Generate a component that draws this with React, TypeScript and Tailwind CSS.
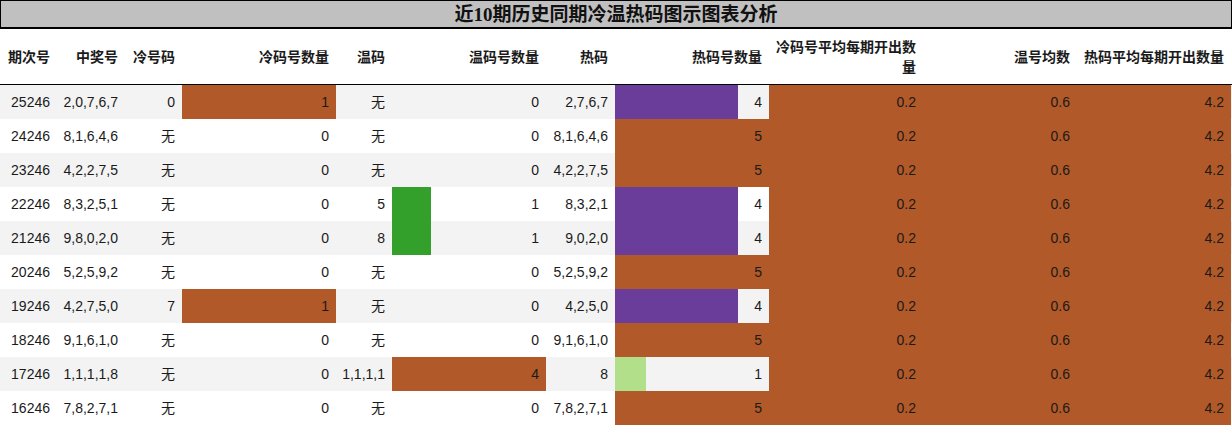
import React from "react";

const ORANGE = "#b15928";
const PURPLE = "#6a3d9a";
const GREEN = "#33a02c";
const LIGHT_GREEN = "#b2df8a";

type Bar = { pct: number; color: string } | null;
type Cell = { text: string; bar?: Bar; bg?: string };

const headers = [
  "期次号",
  "中奖号",
  "冷号码",
  "冷码号数量",
  "温码",
  "温码号数量",
  "热码",
  "热码号数量",
  "冷码号平均每期开出数量",
  "温号均数",
  "热码平均每期开出数量",
];

// [期次, 中奖, 冷号码, 冷数量, 温码, 温数量, 热码, 热数量]
const raw: [string, string, string, number, string, number, string, number][] = [
  ["25246", "2,0,7,6,7", "0", 1, "无", 0, "2,7,6,7", 4],
  ["24246", "8,1,6,4,6", "无", 0, "无", 0, "8,1,6,4,6", 5],
  ["23246", "4,2,2,7,5", "无", 0, "无", 0, "4,2,2,7,5", 5],
  ["22246", "8,3,2,5,1", "无", 0, "5", 1, "8,3,2,1", 4],
  ["21246", "9,8,0,2,0", "无", 0, "8", 1, "9,0,2,0", 4],
  ["20246", "5,2,5,9,2", "无", 0, "无", 0, "5,2,5,9,2", 5],
  ["19246", "4,2,7,5,0", "7", 1, "无", 0, "4,2,5,0", 4],
  ["18246", "9,1,6,1,0", "无", 0, "无", 0, "9,1,6,1,0", 5],
  ["17246", "1,1,1,1,8", "无", 0, "1,1,1,1", 4, "8", 1],
  ["16246", "7,8,2,7,1", "无", 0, "无", 0, "7,8,2,7,1", 5],
];

// colour of a data bar depends on the value in each column
const coldBar = (v: number): Bar => (v > 0 ? { pct: v * 100, color: ORANGE } : null);
const warmBar = (v: number): Bar => {
  if (v === 0) return null;
  return { pct: (v / 4) * 100, color: v === 1 ? GREEN : ORANGE };
};
const hotBar = (v: number): Bar => {
  if (v === 5) return { pct: 100, color: ORANGE };
  if (v === 4) return { pct: 80, color: PURPLE };
  if (v === 1) return { pct: 20, color: LIGHT_GREEN };
  return null;
};

const rows: Cell[][] = raw.map((r) => [
  { text: r[0] },
  { text: r[1] },
  { text: r[2] },
  { text: String(r[3]), bar: coldBar(r[3]) },
  { text: r[4] },
  { text: String(r[5]), bar: warmBar(r[5]) },
  { text: r[6] },
  { text: String(r[7]), bar: hotBar(r[7]) },
  { text: "0.2", bg: ORANGE },
  { text: "0.6", bg: ORANGE },
  { text: "4.2", bg: ORANGE },
]);

const cols =
  "grid grid-cols-[57px_68px_57px_154px_56px_154px_69px_154px_154px_154px_154px]";

function DataCell({ cell }: { cell: Cell }) {
  return (
    <div
      className="relative h-[34px] flex items-center justify-end pr-[7px] pt-px"
      style={cell.bg ? { backgroundColor: cell.bg } : undefined}
    >
      {cell.bar && (
        <div
          className="absolute left-0 top-0 bottom-0"
          style={{ width: `${cell.bar.pct}%`, backgroundColor: cell.bar.color }}
        />
      )}
      <span className="relative">{cell.text}</span>
    </div>
  );
}

export default function App() {
  return (
    <div
      className="w-[1232px] h-[426px] bg-white text-[#1a1a1a] text-[14px] overflow-hidden"
      style={{ fontFamily: '"Liberation Sans", "Noto Sans CJK SC", sans-serif' }}
    >
      {/* title */}
      <div className="h-[29px] bg-[#c0c0c0] border border-b-2 border-black flex items-center justify-center">
        <h1
          className="text-[19px] font-bold leading-none text-[#111]"
          style={{ fontFamily: '"Liberation Serif", "Noto Sans CJK SC", serif' }}
        >
          近10期历史同期冷温热码图示图表分析
        </h1>
      </div>

      {/* header */}
      <div className={`${cols} h-[56px] border-b border-black font-bold`}>
        {headers.map((h) => (
          <div key={h} className="flex items-center justify-end text-right pr-[7px] leading-[20px] pt-px">
            <span>{h}</span>
          </div>
        ))}
      </div>

      {/* rows */}
      {rows.map((row, i) => (
        <div key={i} className={`${cols} ${i % 2 === 0 ? "bg-[#f3f3f3]" : "bg-white"}`}>
          {row.map((c, j) => (
            <DataCell key={j} cell={c} />
          ))}
        </div>
      ))}
    </div>
  );
}
